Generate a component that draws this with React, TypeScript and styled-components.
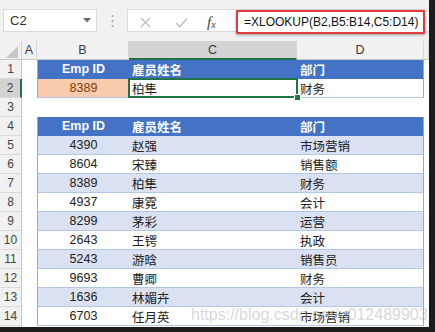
import React from 'react';
import styled, { createGlobalStyle } from 'styled-components';

type Tone = 'none' | 'head' | 'band' | 'plain' | 'key';

interface TRow {
  tone: Tone;
  cells?: [string, string, string];
}

const employees: [string, string, string][] = [
  ['4390', '赵强', '市场营销'],
  ['8604', '宋臻', '销售额'],
  ['8389', '柏隼', '财务'],
  ['4937', '康霓', '会计'],
  ['8299', '茅彩', '运营'],
  ['2643', '王锷', '执政'],
  ['5243', '游晗', '销售员'],
  ['9693', '曹卿', '财务'],
  ['1636', '林媚卉', '会计'],
  ['6703', '任月英', '市场营销'],
];

const header: [string, string, string] = ['Emp ID', '雇员姓名', '部门'];

const sheetRows: TRow[] = [
  { tone: 'head', cells: header },
  { tone: 'key', cells: ['8389', '柏隼', '财务'] },
  { tone: 'none' },
  { tone: 'head', cells: header },
  ...employees.map((cells, i): TRow => ({ tone: i % 2 === 0 ? 'band' : 'plain', cells })),
  { tone: 'none' },
];

const App: React.FC = () => {
  return (
    <>
      <GlobalStyle />
      <Frame>
        <Toolbar>
          <NameBox>
            C2
            <svg width="8" height="5" viewBox="0 0 8 5">
              <path d="M0 0 L8 0 L4 4.5 Z" fill="#6a6a6a" />
            </svg>
          </NameBox>
          <Grip>
            <svg width="3" height="14" viewBox="0 0 3 14">
              <circle cx="1.5" cy="2" r="1" fill="#a0a0a0" />
              <circle cx="1.5" cy="7" r="1" fill="#a0a0a0" />
              <circle cx="1.5" cy="12" r="1" fill="#a0a0a0" />
            </svg>
          </Grip>
          <FormulaArea>
            <ToolIcon>
              <svg width="11" height="11" viewBox="0 0 11 11">
                <path d="M1 1 L10 10 M10 1 L1 10" stroke="#bdbdbd" strokeWidth="1.3" fill="none" />
              </svg>
            </ToolIcon>
            <ToolIcon>
              <svg width="13" height="11" viewBox="0 0 13 11">
                <path d="M1 6 L4.8 9.8 L12 1.5" stroke="#bdbdbd" strokeWidth="1.3" fill="none" />
              </svg>
            </ToolIcon>
            <Fx>
              f<sub>x</sub>
            </Fx>
            <FormulaBox>=XLOOKUP(B2,B5:B14,C5:D14)</FormulaBox>
          </FormulaArea>
        </Toolbar>

        <Sheet>
          <Corner>
            <svg width="22" height="19" viewBox="0 0 22 19">
              <polygon points="18,5 18,17 6,17" fill="#c6c6c6" />
            </svg>
          </Corner>
          <ColHead>A</ColHead>
          <ColHead>B</ColHead>
          <ColHead $active>C</ColHead>
          <ColHead>D</ColHead>
          <ColHead />

          {sheetRows.map((row, i) => (
            <React.Fragment key={i}>
              <RowHead $active={i === 1}>{i + 1}</RowHead>
              <Cell $tone="none" />
              <Cell $tone={row.tone} $align="center" $first>
                {row.cells?.[0]}
              </Cell>
              <Cell $tone={row.tone === 'key' ? 'plain' : row.tone} $selected={i === 1}>
                {row.cells?.[1]}
              </Cell>
              <Cell $tone={row.tone === 'key' ? 'plain' : row.tone} $last>
                {row.cells?.[2]}
              </Cell>
              <Cell $tone="none" />
            </React.Fragment>
          ))}
        </Sheet>

        <Watermark>https://blog.csdn.net/u012489903</Watermark>
      </Frame>
    </>
  );
};

export default App;

const GlobalStyle = createGlobalStyle`
  html, body {
    margin: 0;
    padding: 0;
    background: #ffffff;
  }
  body {
    font-family: 'Liberation Sans', 'Noto Sans CJK SC', sans-serif;
  }
`;

const Frame = styled.div`
  position: relative;
  width: 435px;
  height: 332px;
  box-sizing: border-box;
  overflow: hidden;
  background: #ffffff;
  border-right: 6px solid #1c1c1c;
  border-bottom: 5px solid #1c1c1c;
`;

const Toolbar = styled.div`
  display: flex;
  align-items: flex-start;
  height: 41px;
  box-sizing: border-box;
  padding: 9px 0 0 3px;
  background: #f1f1f1;
`;

const NameBox = styled.div`
  display: flex;
  align-items: center;
  justify-content: space-between;
  width: 94px;
  height: 23px;
  box-sizing: border-box;
  padding: 0 5px 0 6px;
  background: #ffffff;
  border: 1px solid #dadada;
  font-size: 13px;
  color: #333333;
`;

const Grip = styled.div`
  display: flex;
  justify-content: center;
  align-items: center;
  width: 30px;
  height: 23px;
`;

const FormulaArea = styled.div`
  display: grid;
  grid-template-columns: 34px 38px 26px 1fr;
  align-items: center;
  flex: 1;
  height: 23px;
  background: #ffffff;
  border: 1px solid #dadada;
  border-right: none;
  box-sizing: border-box;
`;

const ToolIcon = styled.div`
  display: flex;
  justify-content: center;
  align-items: center;
`;

const Fx = styled.div`
  font-family: 'Liberation Serif', serif;
  font-style: italic;
  font-size: 15px;
  color: #444444;
  line-height: 1;
  padding-left: 7px;

  > sub {
    font-size: 10px;
    vertical-align: -1px;
  }
`;

const FormulaBox = styled.div`
  margin-left: 10px;
  width: 189px;
  height: 24px;
  box-sizing: border-box;
  padding-left: 6px;
  border: 2px solid #e23b3b;
  border-radius: 1px;
  box-shadow: 0 1px 3px rgba(0, 0, 0, 0.35);
  background: #ffffff;
  font-size: 12px;
  line-height: 20px;
  color: #111111;
  white-space: nowrap;
`;

const Sheet = styled.div`
  display: grid;
  grid-template-columns: 22px 15px 92px 168px 127px 1fr;
  grid-auto-rows: 19px;
`;

const Corner = styled.div`
  background: #f1f1f1;
  border-right: 1px solid #d0d0d0;
  border-bottom: 1px solid #c6c6c6;
  box-sizing: border-box;

  > svg {
    display: block;
  }
`;

const ColHead = styled.div<{ $active?: boolean }>`
  display: flex;
  justify-content: center;
  align-items: center;
  box-sizing: border-box;
  background: ${({ $active }) => ($active ? '#d3d3d3' : '#f1f1f1')};
  border-right: 1px solid #d4d4d4;
  border-bottom: ${({ $active }) => ($active ? '2px solid #217346' : '1px solid #c6c6c6')};
  font-size: 12.5px;
  color: #3c3c3c;
`;

const RowHead = styled.div<{ $active?: boolean }>`
  display: flex;
  justify-content: center;
  align-items: center;
  box-sizing: border-box;
  background: ${({ $active }) => ($active ? '#d3d3d3' : '#f1f1f1')};
  border-right: ${({ $active }) => ($active ? '2px solid #217346' : '1px solid #c6c6c6')};
  border-bottom: 1px solid #dadada;
  font-size: 12px;
  color: #444444;
`;

const toneBackground: Record<Tone, string> = {
  none: '#ffffff',
  head: '#4472c4',
  band: '#d9e1f2',
  plain: '#ffffff',
  key: '#f8cbad',
};

const toneColor: Record<Tone, string> = {
  none: '#222222',
  head: '#ffffff',
  band: '#222222',
  plain: '#222222',
  key: '#843c0c',
};

const Cell = styled.div<{
  $tone: Tone;
  $align?: 'left' | 'center';
  $first?: boolean;
  $last?: boolean;
  $selected?: boolean;
}>`
  position: relative;
  display: flex;
  align-items: center;
  justify-content: ${({ $align }) => ($align === 'center' ? 'center' : 'flex-start')};
  box-sizing: border-box;
  padding-left: ${({ $align }) => ($align === 'center' ? '0' : '3px')};
  background: ${({ $tone }) => toneBackground[$tone]};
  color: ${({ $tone }) => toneColor[$tone]};
  font-size: 12.5px;
  font-weight: ${({ $tone }) => ($tone === 'head' ? 700 : 400)};
  white-space: nowrap;
  border-bottom: ${({ $tone }) =>
    $tone === 'none' ? 'none' : $tone === 'head' ? '1px solid #4472c4' : '1px solid #b4c6e7'};
  border-left: ${({ $first, $tone }) => ($first && $tone !== 'none' ? '1px solid #8ea9db' : 'none')};
  border-right: ${({ $last, $tone }) => ($last && $tone !== 'none' ? '1px solid #8ea9db' : 'none')};

  ${({ $selected }) =>
    $selected &&
    `
    &::before {
      content: '';
      position: absolute;
      inset: -1px -1px -1px -1px;
      border: 2px solid #217346;
      z-index: 1;
    }
    &::after {
      content: '';
      position: absolute;
      right: -4px;
      bottom: -4px;
      width: 5px;
      height: 5px;
      background: #217346;
      border: 1px solid #ffffff;
      z-index: 2;
    }
  `}
`;

const Watermark = styled.div`
  position: absolute;
  left: 191px;
  top: 306px;
  font-size: 16px;
  color: rgba(175, 175, 175, 0.5);
  white-space: nowrap;
  pointer-events: none;
  z-index: 3;
`;
